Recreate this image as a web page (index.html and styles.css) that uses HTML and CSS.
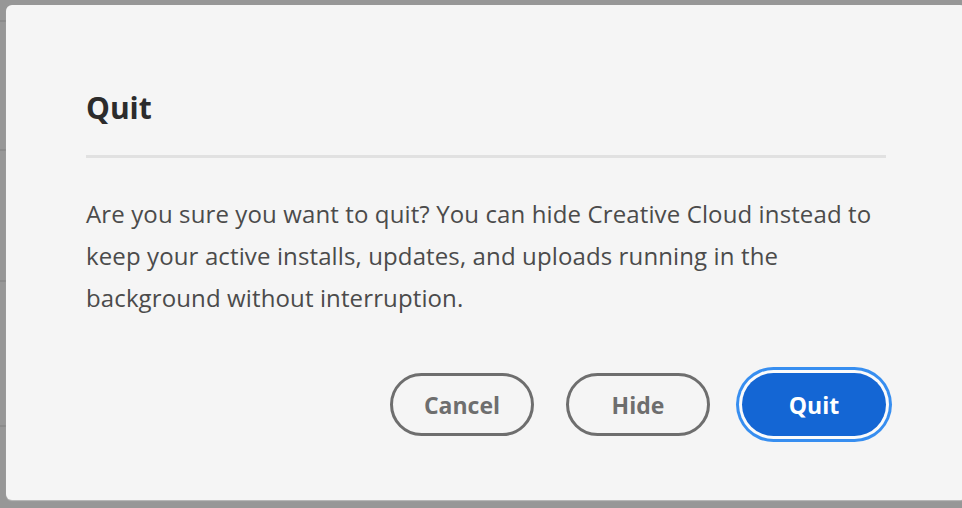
FILE: index.html
```html
<!DOCTYPE html>
<html lang="en">
<head>
<meta charset="utf-8">
<title>Quit</title>
<link rel="stylesheet" href="styles.css">
</head>
<body>
<div class="dialog" role="dialog" aria-labelledby="dlg-title">
  <h1 class="dialog-title" id="dlg-title">Quit</h1>
  <hr class="dialog-divider">
  <p class="dialog-text">Are you sure you want to quit? You can hide Creative Cloud instead to keep your active installs, updates, and uploads running in the background without interruption.</p>
  <div class="dialog-actions">
    <button class="btn btn-secondary">Cancel</button>
    <button class="btn btn-secondary">Hide</button>
    <button class="btn btn-primary">Quit</button>
  </div>
</div>
</body>
</html>
```
FILE: styles.css
```css
html, body {
  margin: 0;
  padding: 0;
  height: 100%;
  overflow: hidden;
}
body {
  background-color: #979797;
  background-image:
    linear-gradient(#8b8b8b, #8b8b8b),
    linear-gradient(#8b8b8b, #8b8b8b),
    linear-gradient(#8b8b8b, #8b8b8b),
    linear-gradient(#8b8b8b, #8b8b8b);
  background-repeat: no-repeat;
  background-size: 6px 2px;
  background-position: 0 20px, 0 149px, 0 280px, 0 425px;
  font-family: "Open Sans", "Noto Sans", sans-serif;
}
.dialog {
  box-sizing: border-box;
  width: 960px;
  height: 495px;
  margin: 5px 0 0 6px;
  padding: 85px 80px 0 80px;
  background: #f5f5f5;
  border-radius: 6px;
  box-shadow: 0 1px 1px rgba(255,255,255,0.35);
}
.dialog-title {
  margin: 0;
  font-size: 30px;
  line-height: 36px;
  font-weight: 700;
  color: #2c2c2c;
}
.dialog-divider {
  margin: 29px 0 0 0;
  width: 800px;
  height: 3px;
  border: 0;
  background: #e1e1e1;
}
.dialog-text {
  margin: 35px 0 0 0;
  width: 800px;
  font-size: 24px;
  line-height: 42px;
  letter-spacing: 0.12px;
  color: #4b4b4b;
}
.dialog-actions {
  display: flex;
  justify-content: flex-end;
  gap: 32px;
  width: 800px;
  margin-top: 54px;
}
.btn {
  box-sizing: border-box;
  width: 144px;
  height: 63px;
  border-radius: 32px;
  font-family: inherit;
  font-size: 23px;
  font-weight: 700;
  padding: 0;
  cursor: pointer;
}
.btn-secondary {
  background: transparent;
  border: 3px solid #6e6e6e;
  color: #6e6e6e;
}
.btn-primary {
  border: 0;
  background: #1466d4;
  color: #ffffff;
  box-shadow: 0 0 0 3px #fbfbfb, 0 0 0 6px #378ef0;
}
```
